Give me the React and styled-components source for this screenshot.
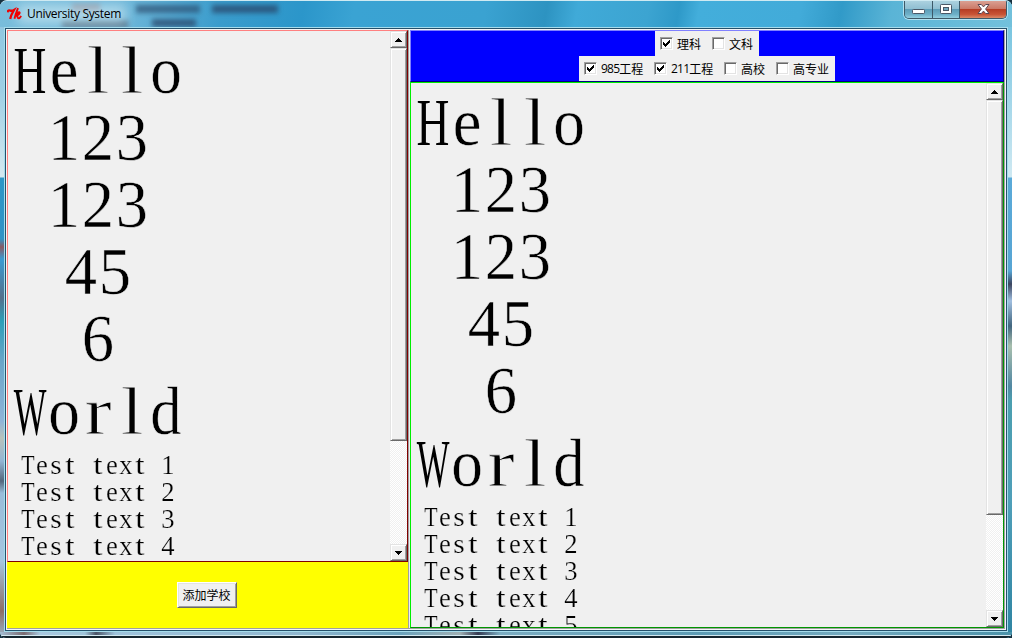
import React from "react";
import styled, { createGlobalStyle } from "styled-components";

const Global = createGlobalStyle`
  * { box-sizing: border-box; }
  body { margin: 0; overflow: hidden; background: #16313f; }
`;

const Window = styled.div`
  width: 1012px;
  height: 638px;
  position: relative;
  overflow: hidden;
  display: flex;
  flex-direction: column;
  border-top: 1px solid #cfeaf2;
  border-radius: 7px 7px 6px 6px;
  font-family: "Open Sans", "Noto Sans CJK SC", sans-serif;
  background:
    linear-gradient(#d2e8f0 0 1px, #14242e 1px 3px) 0 634px / 100% 3px no-repeat,
    linear-gradient(90deg, #a5bfd6 0, #7a6a70 24px, #a8c8e0 40px, #9fc4da 85px, #4a5366 96px, #9ec3dc 115px, #8fb7d0 300px, #6aa3bd 400px, #9fb0b4 460px, #343a52 478px, #7badc2 500px, #5c9cb5 700px, #74abc0 850px, #4b93aa 1012px) 0 631px / 100% 7px no-repeat,
    linear-gradient(180deg, #8cc4e0 0, #9fcfe4 90px, #d5e9f0 176px, #2e96c6 177px, #3193c6 238px, #8a5964 246px, #3b9bd2 258px, #55708c 297px, #2d9fb8 320px, #6aa5c8 360px, #8fb4d8 420px, #b8c2bb 437px, #93b5d4 460px, #54677c 480px, #9abcd9 492px, #a5c6e0 560px, #8f6d64 610px, #9ab9d0 638px) 0 0 / 7px 100% no-repeat,
    linear-gradient(180deg, #6cc0dd 0, #8ccde5 60px, #cfe9f2 176px, #5aaad9 177px, #57a5d4 270px, #3b4560 283px, #a0bfe0 300px, #42667f 325px, #a8bfae 345px, #5288a2 385px, #4b9fb0 400px, #4f9fb9 500px, #2e84a2 638px) 1005px 0 / 7px 100% no-repeat,
    #409fce;
`;

const TitleBar = styled.header`
  height: 26px;
  flex: none;
  position: relative;
  overflow: hidden;
  display: flex;
  align-items: center;
  padding-left: 7px;
  background: linear-gradient(100deg, #79bddb 0, #6bb5d8 130px, #3a9ccc 220px, #2b96ca 300px, #3aa3d3 350px, #3aa2d1 480px, #2d93c1 540px, #40aad8 570px, #3ca4d1 640px, #2e99c8 670px, #43aedb 690px, #42abd9 790px, #319ac8 830px, #5ab4d6 880px, #75c2dc 1012px);
`;

const Smudge = styled.span`
  position: absolute;
  left: ${(p) => p.$x}px;
  top: ${(p) => p.$y}px;
  width: ${(p) => p.$w}px;
  height: 8px;
  background: ${(p) => p.$c};
  filter: blur(2.5px);
`;

const TitleGlow = styled.span`
  position: absolute;
  left: 18px;
  top: 3px;
  width: 108px;
  height: 20px;
  background: rgba(205, 232, 243, 0.65);
  filter: blur(6px);
`;

const TitleText = styled.span`
  position: relative;
  margin-left: 5px;
  font-size: 12px;
  line-height: 16px;
  letter-spacing: -0.32px;
  color: #000;
  white-space: nowrap;
`;

const TkMark = styled.svg`
  position: relative;
  width: 15px;
  height: 14px;
  flex: none;
`;

const Controls = styled.div`
  position: absolute;
  right: 5px;
  top: -1px;
  display: flex;
  height: 19px;
  border: 1px solid #3d5968;
  border-top: 0;
  border-radius: 0 0 5px 5px;
  box-shadow: 0 0 0 1px rgba(205, 240, 250, 0.75);
  overflow: hidden;
`;

const Control = styled.span`
  width: ${(p) => p.$w}px;
  display: flex;
  align-items: center;
  justify-content: center;
  border-right: ${(p) => (p.$close ? "0" : "1px solid #3d5968")};
  background: ${(p) =>
    p.$close
      ? "linear-gradient(#dca598 0, #cb7a68 48%, #b43c22 50%, #c85435 80%, #d98a68 100%)"
      : "linear-gradient(#aed3e1 0, #90bfd2 48%, #5b9bb6 50%, #6eb0c8 80%, #94cfdf 100%)"};
`;

const Frame = styled.main`
  width: 1004px;
  height: 605px;
  margin-left: 4px;
  flex: none;
  border: 1px solid #a5dcec;
`;

const FrameEdge = styled.div`
  height: 100%;
  border: 1px solid #24506a;
`;

const Client = styled.div`
  height: 100%;
  border: 1px solid #f4f6f8;
  background: #a0a0a0;
  padding: 0 1px 1px 0;
  display: flex;
`;

const LeftColumn = styled.section`
  width: 401px;
  display: flex;
  flex-direction: column;
`;

const Divider = styled.div`
  width: 2px;
  background: linear-gradient(90deg, #a0a0a0 50%, #f0f0f0 50%);
`;

const RightColumn = styled.section`
  width: 594px;
  display: flex;
  flex-direction: column;
`;

const Canvas = styled.div`
  height: ${(p) => p.$h}px;
  display: flex;
  justify-content: space-between;
  overflow: hidden;
  background: #f0f0f0;
  border: 1px solid;
  border-color: ${(p) => `${p.$light} ${p.$dark} ${p.$dark} ${p.$light}`};
`;

const TextColumn = styled.div`
  width: 170px;
  margin-left: 5px;
  padding-top: 6px;
  display: flex;
  flex-direction: column;
  align-items: center;
  color: #000;
  font-family: "Liberation Serif", "Noto Sans CJK SC", serif;
`;

const Line = styled.div`
  flex: none;
  height: ${(p) => (p.$small ? 27 : 67)}px;
  line-height: ${(p) => (p.$small ? 27 : 67)}px;
  font-size: ${(p) => (p.$small ? 28 : 68)}px;
  margin-top: ${(p) => p.$gap || 0}px;
  white-space: pre;
  display: flex;
`;

const Cell = styled.span`
  width: 0.5em;
  display: flex;
  justify-content: center;
  transform: scaleX(${(p) => p.$sx});
  -webkit-text-stroke: ${(p) => p.$thin}px #f0f0f0;
`;

const Scroll = styled.div`
  width: 17px;
  display: flex;
  flex-direction: column;
  background: repeating-conic-gradient(#ffffff 0 25%, #f0f0f0 0 50%) 0 0 / 2px 2px;
`;

const Raised = styled.div`
  flex: none;
  height: ${(p) => p.$h}px;
  margin-top: ${(p) => (p.$end ? "auto" : "0")};
  display: flex;
  align-items: center;
  justify-content: center;
  background: #f0f0f0;
  border: 1px solid;
  border-color: #e3e3e3 #696969 #696969 #e3e3e3;
  box-shadow: inset 1px 1px #fff, inset -1px -1px #a0a0a0;
`;

const ActionArea = styled.div`
  height: 66px;
  padding-right: 1px;
  background: #ffff00;
  display: flex;
  justify-content: center;
  align-items: center;
`;

const PushButton = styled.button`
  width: 60px;
  height: 26px;
  margin: 0;
  padding: 0 1px 0 0;
  border: 1px solid;
  border-color: #fff #696969 #696969 #fff;
  box-shadow: inset 1px 1px #e3e3e3, inset -1px -1px #a0a0a0;
  background: #f0f0f0;
  color: #000;
  font: 12px/22px "Noto Sans CJK SC", sans-serif;
`;

const FilterBar = styled.div`
  height: 52px;
  background: #0000ff;
  border: 1px solid;
  border-color: #8080ff #000080 #000080 #8080ff;
  display: flex;
  flex-direction: column;
  align-items: center;
`;

const FilterRow = styled.div`
  height: 25px;
  display: flex;
  background: #f0f0f0;
`;

const Option = styled.label`
  width: ${(p) => p.$w}px;
  display: flex;
  align-items: center;
  padding-left: 5px;
  color: #000;
  font: 12px/24px "Noto Sans CJK SC", sans-serif;
  white-space: nowrap;
`;

const Box = styled.span`
  width: 13px;
  height: 13px;
  margin-right: 4px;
  flex: none;
  display: flex;
  align-items: center;
  justify-content: center;
  background: #fff;
  border: 1px solid;
  border-color: #a0a0a0 #fff #fff #a0a0a0;
  box-shadow: inset 1px 1px #696969, inset -1px -1px #e3e3e3;
`;

const Digits = styled.span`
  font-family: "Open Sans", sans-serif;
  letter-spacing: -0.75px;
`;

const bigScale = { H: 0.67, W: 0.51, l: 1.25, o: 0.93, r: 1.2, d: 0.92 };
const smallScale = { T: 0.78, t: 1.2, s: 1.05, x: 0.95 };
const bigThin = { l: 1.2, r: 0.9, H: 0, W: 0, d: 0.5, o: 0.4, e: 0.4 };

function SpacedLine({ text, small, gap }) {
  const scale = small ? smallScale : bigScale;
  return (
    <Line $small={small} $gap={gap}>
      {[...text].map((ch, i) => (
        <Cell
          key={i}
          $sx={scale[ch] || 0.95}
          $thin={small ? 0.2 : bigThin[ch] ?? 0.5}
        >
          {ch}
        </Cell>
      ))}
    </Line>
  );
}

function Arrow({ down }) {
  return (
    <svg width="7" height="4" viewBox="0 0 7 4" shapeRendering="crispEdges">
      <path d={down ? "M0 0h7v1h-1v1h-1v1h-1v1h-1v-1h-1v-1h-1v-1h-1z" : "M3 0h1v1h1v1h1v1h1v1h-7v-1h1v-1h1v-1h1z"} />
    </svg>
  );
}

function ScrollBar({ thumb }) {
  return (
    <Scroll>
      <Raised $h={17}><Arrow /></Raised>
      <Raised $h={thumb} />
      <Raised $h={17} $end><Arrow down /></Raised>
    </Scroll>
  );
}

function Listing({ h, light, dark, thumb, count }) {
  return (
    <Canvas $h={h} $light={light} $dark={dark}>
      <TextColumn>
        {["Hello", "123", "123", "45", "6"].map((t, i) => (
          <SpacedLine key={i} text={t} />
        ))}
        <SpacedLine text="World" gap={6} />
        {Array.from({ length: count }, (_, i) => (
          <SpacedLine key={i} small text={`Test text ${i + 1}`} gap={i ? 0 : 6} />
        ))}
      </TextColumn>
      <ScrollBar thumb={thumb} />
    </Canvas>
  );
}

function Check({ w, digits, children, on }) {
  return (
    <Option $w={w}>
      <Box>
        {on && (
          <svg width="7" height="7" viewBox="0 0 7 7" shapeRendering="crispEdges">
            <path d="M0 2h1v1h1v1h1v-1h1v-1h1v-1h1v-1h1v3h-1v1h-1v1h-1v1h-1v1h-1v-1h-1v-1h-1z" />
          </svg>
        )}
      </Box>
      {digits && <Digits>{digits}</Digits>}
      {children}
    </Option>
  );
}

export default function App() {
  return (
    <>
      <Global />
      <Window>
        <TitleBar>
          <Smudge $x={72} $y={3} $w={28} $c="rgba(130,100,110,.6)" />
          <Smudge $x={62} $y={19} $w={66} $c="rgba(70,90,110,.7)" />
          <Smudge $x={136} $y={4} $w={64} $c="rgba(40,70,105,.65)" />
          <Smudge $x={212} $y={4} $w={66} $c="rgba(40,70,105,.75)" />
          <Smudge $x={152} $y={18} $w={44} $c="rgba(40,70,105,.75)" />
          <TitleGlow />
          <TkMark viewBox="0 0 15 14" fill="none" stroke="#f00000">
            <path d="M.6 5.4C.8 3.3 2 3.2 3.3 3.6S5.5 3.9 7 3C5.7 5.5 3.7 8 3.2 12" strokeWidth="2.3" />
            <path d="M11 1.2C9.9 4 8.4 7.5 7.5 11.8M8 9.2C10 8.5 13 6.8 12.6 5.6S10 6.5 9.3 8.2C10.6 8 10.2 11.4 11.5 11.4S13.6 10 14.2 9" strokeWidth="1.9" />
          </TkMark>
          <TitleText>University System</TitleText>
          <Controls>
            <Control $w={28}>
              <svg width="13" height="19" viewBox="0 0 13 19">
                <rect x=".5" y="9.5" width="12" height="4" rx=".8" fill="#fff" stroke="#4a5766" />
              </svg>
            </Control>
            <Control $w={27}>
              <svg width="12" height="19" viewBox="0 0 12 19">
                <rect x=".5" y="4.5" width="11" height="9" rx=".8" fill="#fff" stroke="#4a5766" />
                <rect x="3.5" y="7.5" width="5" height="3" fill="#73a9c0" stroke="#4a5766" />
              </svg>
            </Control>
            <Control $w={46} $close>
              <svg width="13" height="19" viewBox="0 0 13 19">
                <path d="M1 4.5h3.3l2.2 2.4 2.2-2.4H12L8.6 9l3.4 4.5H8.7L6.5 11.1 4.3 13.5H1L4.4 9z" fill="#fff" stroke="#5b4650" />
              </svg>
            </Control>
          </Controls>
        </TitleBar>
        <Frame>
          <FrameEdge>
            <Client>
              <LeftColumn>
                <Listing h={532} light="#ff8080" dark="#800000" thumb={393} count={4} />
                <ActionArea>
                  <PushButton>添加学校</PushButton>
                </ActionArea>
              </LeftColumn>
              <Divider />
              <RightColumn>
                <FilterBar>
                  <FilterRow>
                    <Check w={52} on>理科</Check>
                    <Check w={52}>文科</Check>
                  </FilterRow>
                  <FilterRow>
                    <Check w={70} digits="985" on>工程</Check>
                    <Check w={70} digits="211" on>工程</Check>
                    <Check w={52}>高校</Check>
                    <Check w={64}>高专业</Check>
                  </FilterRow>
                </FilterBar>
                <Listing h={546} light="#00ee00" dark="#009600" thumb={415} count={5} />
              </RightColumn>
            </Client>
          </FrameEdge>
        </Frame>
      </Window>
    </>
  );
}
